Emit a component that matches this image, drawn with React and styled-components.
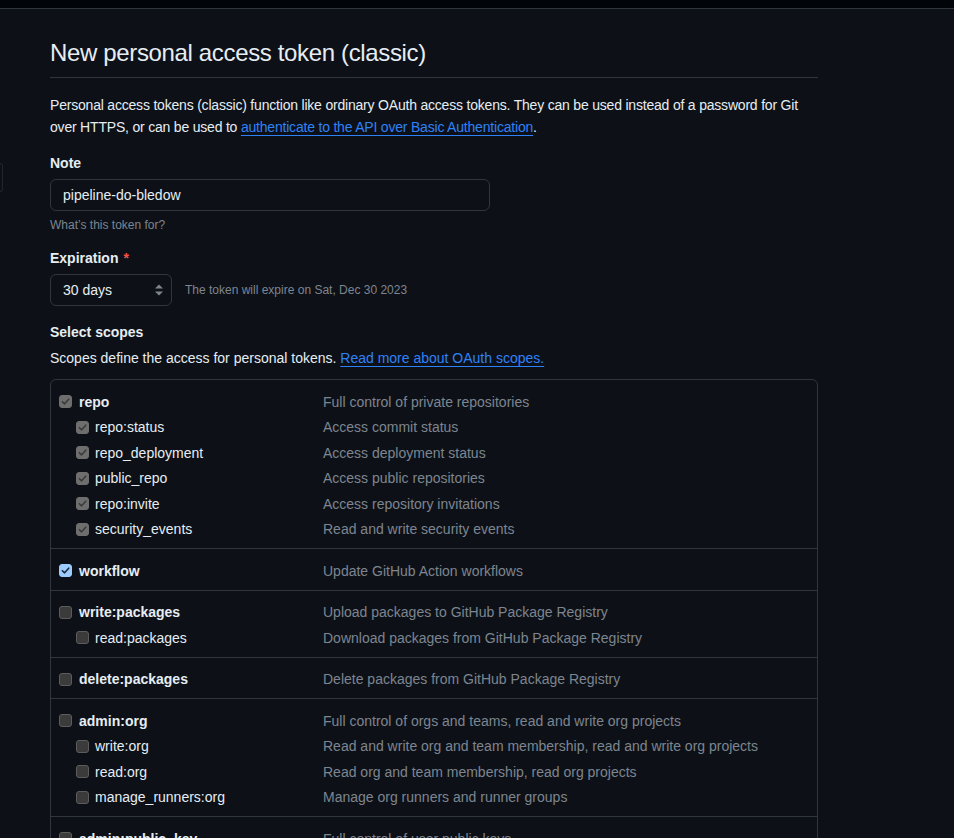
import React from 'react';
import styled, { createGlobalStyle, css } from 'styled-components';

const Global = createGlobalStyle`
  html, body {
    margin: 0;
    background: #0d1117;
  }
  body {
    font-family: "Liberation Sans", Arial, sans-serif;
    color: #e6edf3;
    font-size: 14px;
  }
`;

const TopBar = styled.div`
  height: 8px;
  background: #010409;
  border-bottom: 1px solid #30363d;
`;

const Page = styled.div`
  display: flex;
`;

const SideStub = styled.div`
  width: 3px;
  flex-shrink: 0;
`;

const StubTab = styled.div`
  margin-top: 154px;
  height: 27px;
  border: 1px solid #21262d;
  border-left: none;
  border-radius: 0 6px 6px 0;
  background: #0d1117;
`;

const Main = styled.div`
  margin-left: 47px;
  width: 768px;
  padding-top: 29px;
`;

const Title = styled.h1`
  margin: 0 0 16px;
  padding-bottom: 9px;
  font-size: 24px;
  font-weight: 400;
  line-height: 30px;
  letter-spacing: -0.35px;
  border-bottom: 1px solid #30363d;
`;

const Lead = styled.p`
  margin: 0 0 15px;
  line-height: 22px;
  letter-spacing: -0.2px;
`;

const Link = styled.a`
  color: #2f81f7;
  text-decoration: underline;
  text-underline-offset: 3px;
`;

const Field = styled.div`
  margin-bottom: ${p => p.$gap || 14}px;
`;

const Label = styled.div`
  font-weight: 700;
  line-height: 21px;
  margin-bottom: ${p => p.$mb ?? 5}px;
`;

const Required = styled.span`
  color: #f85149;
  margin-left: 5px;
`;

const TextInput = styled.div`
  box-sizing: border-box;
  width: 440px;
  height: 32px;
  border: 1px solid #30363d;
  border-radius: 6px;
  padding: 0 12px;
  display: flex;
  align-items: center;
  line-height: 20px;
`;

const Hint = styled.div`
  margin-top: 5px;
  font-size: 12px;
  line-height: 18px;
  color: #7d8590;
`;

const SelectRow = styled.div`
  display: flex;
  align-items: center;
  gap: 13px;
`;

const Select = styled.div`
  box-sizing: border-box;
  width: 122px;
  height: 32px;
  border: 1px solid #30363d;
  border-radius: 6px;
  padding: 0 7px 0 12px;
  display: flex;
  align-items: center;
  justify-content: space-between;
  color: #7d8590;
  span { color: #e6edf3; }
`;

const Muted = styled.span`
  font-size: 12px;
  color: #7d8590;
`;

const Desc = styled.div`
  line-height: 21px;
  margin-bottom: 10px;
`;

const Table = styled.div`
  border: 1px solid #30363d;
  border-radius: 6px;
`;

const Group = styled.div`
  padding: 9px 8px 6px;
  & + & { border-top: 1px solid #30363d; }
`;

const Row = styled.div`
  display: grid;
  grid-template-columns: 264px 1fr;
  align-items: center;
  height: 25.5px;
`;

const Name = styled.div`
  display: flex;
  align-items: center;
  padding-left: ${p => (p.$sub ? 17 : 0)}px;
  font-weight: ${p => (p.$sub ? 400 : 700)};
  gap: ${p => (p.$sub ? 6 : 7)}px;
`;

const ScopeDesc = styled.div`
  color: #7d8590;
`;

const boxStates = {
  locked: css`
    background: #6e6e6e;
    border-color: #6e6e6e;
    color: #3a3a3a;
  `,
  checked: css`
    background: #9ecbff;
    border-color: #9ecbff;
    color: #1b2433;
  `,
  off: css`
    background: #3b3b3b;
    border-color: #5c5c5c;
  `,
};

const Box = styled.span`
  box-sizing: border-box;
  width: 13px;
  height: 13px;
  border: 1px solid;
  border-radius: 3px;
  display: inline-flex;
  align-items: center;
  justify-content: center;
  flex-shrink: 0;
  ${p => boxStates[p.$state]}
`;

const Check = ({ state }) => (
  <Box $state={state}>
    {state !== 'off' && (
      <svg width="9" height="9" viewBox="0 0 10 10">
        <path d="M1.5 5.2 L4 7.6 L8.6 2.4" fill="none" stroke="currentColor" strokeWidth="1.7" strokeLinecap="round" strokeLinejoin="round" />
      </svg>
    )}
  </Box>
);

const SortIcon = () => (
  <svg width="10" height="14" viewBox="0 0 10 14">
    <path d="M5 1.5 L9 5.5 H1 Z M5 12.5 L1 8.5 H9 Z" fill="currentColor" />
  </svg>
);

const groups = [
  [
    ['repo', 'Full control of private repositories', 'locked'],
    ['repo:status', 'Access commit status', 'locked', true],
    ['repo_deployment', 'Access deployment status', 'locked', true],
    ['public_repo', 'Access public repositories', 'locked', true],
    ['repo:invite', 'Access repository invitations', 'locked', true],
    ['security_events', 'Read and write security events', 'locked', true],
  ],
  [['workflow', 'Update GitHub Action workflows', 'checked']],
  [
    ['write:packages', 'Upload packages to GitHub Package Registry', 'off'],
    ['read:packages', 'Download packages from GitHub Package Registry', 'off', true],
  ],
  [['delete:packages', 'Delete packages from GitHub Package Registry', 'off']],
  [
    ['admin:org', 'Full control of orgs and teams, read and write org projects', 'off'],
    ['write:org', 'Read and write org and team membership, read and write org projects', 'off', true],
    ['read:org', 'Read org and team membership, read org projects', 'off', true],
    ['manage_runners:org', 'Manage org runners and runner groups', 'off', true],
  ],
  [
    ['admin:public_key', 'Full control of user public keys', 'off'],
    ['write:public_key', 'Write user public keys', 'off', true],
    ['read:public_key', 'Read user public keys', 'off', true],
  ],
];

export default function App() {
  return (
    <>
      <Global />
      <TopBar />
      <Page>
        <SideStub>
          <StubTab />
        </SideStub>
        <Main>
          <Title>New personal access token (classic)</Title>
          <Lead>
            Personal access tokens (classic) function like ordinary OAuth access tokens. They can be used instead of a password for Git
            over HTTPS, or can be used to <Link>authenticate to the API over Basic Authentication</Link>.
          </Lead>
          <Field>
            <Label>Note</Label>
            <TextInput>pipeline-do-bledow</TextInput>
            <Hint>What’s this token for?</Hint>
          </Field>
          <Field $gap={16}>
            <Label>
              Expiration<Required>*</Required>
            </Label>
            <SelectRow>
              <Select>
                <span>30 days</span>
                <SortIcon />
              </Select>
              <Muted>The token will expire on Sat, Dec 30 2023</Muted>
            </SelectRow>
          </Field>
          <Label $mb={5}>Select scopes</Label>
          <Desc>
            Scopes define the access for personal tokens. <Link>Read more about OAuth scopes.</Link>
          </Desc>
          <Table>
            {groups.map((rows, gi) => (
              <Group key={gi}>
                {rows.map(([name, desc, state, sub]) => (
                  <Row key={name}>
                    <Name $sub={sub}>
                      <Check state={state} />
                      {name}
                    </Name>
                    <ScopeDesc>{desc}</ScopeDesc>
                  </Row>
                ))}
              </Group>
            ))}
          </Table>
        </Main>
      </Page>
    </>
  );
}
